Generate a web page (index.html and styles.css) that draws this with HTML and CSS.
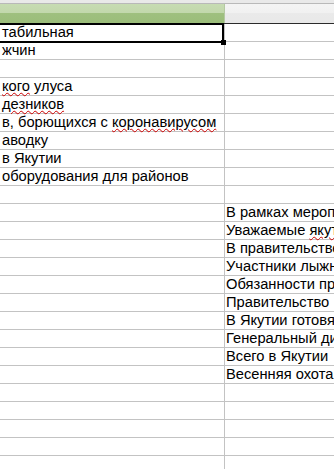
FILE: index.html
```html
<!DOCTYPE html>
<html>
<head>
<meta charset="utf-8">
<link rel="stylesheet" href="styles.css">
</head>
<body>
<div class="sheet">
  <div class="topstrip"></div>
  <div class="header">
    <div class="hcell hcell-a"></div>
    <div class="hcell hcell-b"></div>
  </div>
  <div class="rows">
    <div class="row"><div class="cell a">табильная</div><div class="cell b"></div></div>
    <div class="row"><div class="cell a">жчин</div><div class="cell b"></div></div>
    <div class="row"><div class="cell a"></div><div class="cell b"></div></div>
    <div class="row"><div class="cell a"><span class="sp">кого</span> улуса</div><div class="cell b"></div></div>
    <div class="row"><div class="cell a"><span class="sp">дезников</span></div><div class="cell b"></div></div>
    <div class="row"><div class="cell a">в, борющихся с <span class="sp">коронавирусом</span></div><div class="cell b"></div></div>
    <div class="row"><div class="cell a">аводку</div><div class="cell b"></div></div>
    <div class="row"><div class="cell a">в Якутии</div><div class="cell b"></div></div>
    <div class="row"><div class="cell a">оборудования для районов</div><div class="cell b"></div></div>
    <div class="row"><div class="cell a"></div><div class="cell b"></div></div>
    <div class="row"><div class="cell a"></div><div class="cell b">В рамках мероприятий</div></div>
    <div class="row"><div class="cell a"></div><div class="cell b">Уважаемые <span class="sp">якутяне</span></div></div>
    <div class="row"><div class="cell a"></div><div class="cell b">В правительстве</div></div>
    <div class="row"><div class="cell a"></div><div class="cell b">Участники лыжных</div></div>
    <div class="row"><div class="cell a"></div><div class="cell b">Обязанности председателя</div></div>
    <div class="row"><div class="cell a"></div><div class="cell b">Правительство</div></div>
    <div class="row"><div class="cell a"></div><div class="cell b">В Якутии готовятся</div></div>
    <div class="row"><div class="cell a"></div><div class="cell b">Генеральный директор</div></div>
    <div class="row"><div class="cell a"></div><div class="cell b">Всего в Якутии</div></div>
    <div class="row"><div class="cell a"></div><div class="cell b">Весенняя охота</div></div>
    <div class="row"><div class="cell a"></div><div class="cell b"></div></div>
    <div class="row"><div class="cell a"></div><div class="cell b"></div></div>
    <div class="row"><div class="cell a"></div><div class="cell b"></div></div>
    <div class="row"><div class="cell a"></div><div class="cell b"></div></div>
    <div class="row"><div class="cell a"></div><div class="cell b"></div></div>
  </div>
  <div class="selection"><div class="handle"></div></div>
</div>
</body>
</html>
```
FILE: styles.css
```css
html, body {
  margin: 0;
  padding: 0;
  background: #ffffff;
  overflow: hidden;
}
.sheet {
  position: relative;
  width: 334px;
  height: 469px;
  overflow: hidden;
  font-family: "Liberation Sans", Arial, sans-serif;
  font-size: 14.7px;
  color: #000;
}
.topstrip {
  height: 3px;
  background: #e9e9e9;
  border-bottom: 1px solid #b9b9b9;
}
.header {
  display: flex;
  height: 19px;
  border-bottom: 1px solid #2b2b2b;
}
.hcell-a {
  width: 224px;
  flex: none;
  background: linear-gradient(to bottom, #c7dcb3 0%, #c2d8ac 45%, #9fc07f 50%, #9bbd7a 100%);
  border-right: 1px solid #b5c9a3;
}
.hcell-b {
  flex: 1;
  background: linear-gradient(to bottom, #f4f4f4 0%, #f1f1f1 45%, #eaeaea 50%, #e8e8e8 100%);
}
.rows {
  display: flex;
  flex-direction: column;
}
.row {
  display: flex;
  height: 17px;
  border-bottom: 1px solid #c3c3c3;
  flex: none;
}
.cell {
  height: 17px;
  line-height: 17px;
  white-space: nowrap;
  overflow-x: clip;
  overflow-y: visible;
}
.cell.a {
  flex: none;
  width: 225px;
  box-sizing: border-box;
  border-right: 1px solid #c3c3c3;
  padding-left: 2px;
}
.cell.b {
  flex: 1;
  padding-left: 1px;
}
.sp {
  text-decoration: underline wavy #cc0000;
  text-decoration-thickness: 1px;
  text-underline-offset: 1px;
}
.selection {
  position: absolute;
  left: -4px;
  top: 23px;
  width: 224px;
  height: 16px;
  border: 2px solid #000;
  box-sizing: content-box;
}
.handle {
  position: absolute;
  right: -4px;
  bottom: -4px;
  width: 5px;
  height: 5px;
  background: #000;
}
```
